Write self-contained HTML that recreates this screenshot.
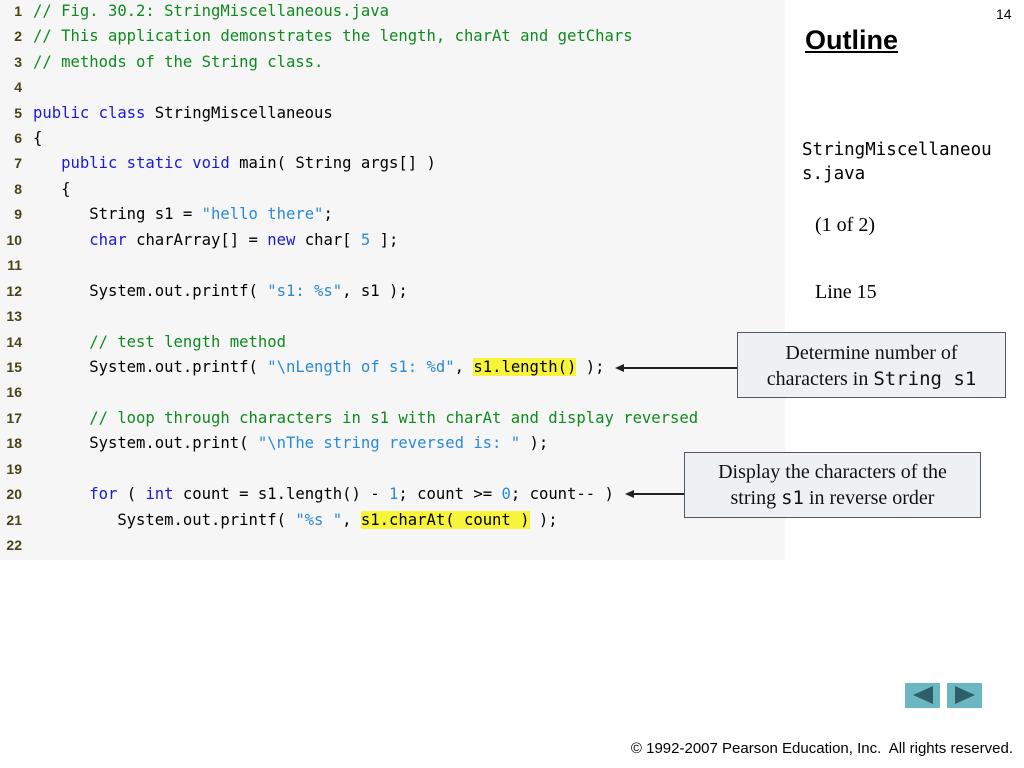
<!DOCTYPE html>
<html><head><style>
body{margin:0;width:1024px;height:768px;background:#fff;position:relative;overflow:hidden;font-family:"Liberation Sans",sans-serif}
#code{position:absolute;left:0;top:0;width:785px;height:560px;background:#f6f6f6}
.ln{position:absolute;left:0;width:22px;text-align:right;font:bold 14px "Liberation Sans",sans-serif;color:#4a4316}
.cd{position:absolute;left:33px;font:15.6px "DejaVu Sans Mono",monospace;color:#000;white-space:pre;letter-spacing:-0.02px}
.c{color:#0f8a1f}.k{color:#1a1ad6}.s{color:#2a8ad8}.h{background:#f7f43a}
.box{position:absolute;background:#eef1f4;border:1px solid #556;font:20px "Liberation Serif",serif;text-align:center;line-height:26px;color:#111}
.box code{font:19px "DejaVu Sans Mono",monospace}
.arr{position:absolute;height:2px;background:#222}
.ah{position:absolute;width:0;height:0;border-top:4px solid transparent;border-bottom:4px solid transparent;border-right:9px solid #222}
.nav{position:absolute;top:683px;width:35px;height:25px;background:#6ab7c2}
</style></head><body>
<div id="code"></div>
<div class="ln" style="top:3px">1</div><div class="cd c" style="top:2px">// Fig. 30.2: StringMiscellaneous.java</div>
<div class="ln" style="top:28px">2</div><div class="cd c" style="top:27px">// This application demonstrates the length, charAt and getChars</div>
<div class="ln" style="top:54px">3</div><div class="cd c" style="top:53px">// methods of the String class.</div>
<div class="ln" style="top:79px">4</div>
<div class="ln" style="top:105px">5</div><div class="cd" style="top:104px"><span class="k">public class</span> StringMiscellaneous</div>
<div class="ln" style="top:130px">6</div><div class="cd" style="top:129px">{</div>
<div class="ln" style="top:155px">7</div><div class="cd" style="top:154px">   <span class="k">public static void</span> main( String args[] )</div>
<div class="ln" style="top:181px">8</div><div class="cd" style="top:180px">   {</div>
<div class="ln" style="top:206px">9</div><div class="cd" style="top:205px">      String s1 = <span class="s">"hello there"</span>;</div>
<div class="ln" style="top:232px">10</div><div class="cd" style="top:231px">      <span class="k">char</span> charArray[] = <span class="k">new</span> char[ <span class="s">5</span> ];</div>
<div class="ln" style="top:257px">11</div>
<div class="ln" style="top:283px">12</div><div class="cd" style="top:282px">      System.out.printf( <span class="s">"s1: %s"</span>, s1 );</div>
<div class="ln" style="top:308px">13</div>
<div class="ln" style="top:334px">14</div><div class="cd c" style="top:333px">      // test length method</div>
<div class="ln" style="top:359px">15</div><div class="cd" style="top:358px">      System.out.printf( <span class="s">"\nLength of s1: %d"</span>, <span class="h">s1.length()</span> );</div>
<div class="ln" style="top:384px">16</div>
<div class="ln" style="top:410px">17</div><div class="cd c" style="top:409px">      // loop through characters in s1 with charAt and display reversed</div>
<div class="ln" style="top:435px">18</div><div class="cd" style="top:434px">      System.out.print( <span class="s">"\nThe string reversed is: "</span> );</div>
<div class="ln" style="top:461px">19</div>
<div class="ln" style="top:486px">20</div><div class="cd" style="top:485px">      <span class="k">for</span> ( <span class="k">int</span> count = s1.length() - <span class="s">1</span>; count &gt;= <span class="s">0</span>; count-- )</div>
<div class="ln" style="top:512px">21</div><div class="cd" style="top:511px">         System.out.printf( <span class="s">"%s "</span>, <span class="h">s1.charAt( count )</span> );</div>
<div class="ln" style="top:537px">22</div>

<div style="position:absolute;left:996px;top:6px;font-size:14px">14</div>
<div style="position:absolute;left:805px;top:25px;font:bold 27px 'Liberation Sans',sans-serif;text-decoration:underline">Outline</div>
<div style="position:absolute;left:802px;top:138px;font:17.5px 'DejaVu Sans Mono',monospace;line-height:24px">StringMiscellaneou<br>s.java</div>
<div style="position:absolute;left:815px;top:214px;font:20px 'Liberation Serif',serif">(1 of 2)</div>
<div style="position:absolute;left:815px;top:281px;font:20px 'Liberation Serif',serif">Line 15</div>

<div class="box" style="left:737px;top:332px;width:269px;height:66px;padding-top:7px;box-sizing:border-box">Determine number of<br>characters in <code>String s1</code></div>
<div class="arr" style="left:622px;top:367px;width:115px"></div><div class="ah" style="left:615px;top:364px"></div>
<div class="box" style="left:684px;top:452px;width:297px;height:66px;padding-top:6px;box-sizing:border-box">Display the characters of the<br>string <code>s1</code> in reverse order</div>
<div class="arr" style="left:633px;top:493px;width:51px"></div><div class="ah" style="left:625px;top:490px"></div>

<div class="nav" style="left:905px"><div style="position:absolute;left:8px;top:3px;border-top:9px solid transparent;border-bottom:9px solid transparent;border-right:20px solid #2e5f68"></div></div>
<div class="nav" style="left:947px"><div style="position:absolute;left:8px;top:3px;border-top:9px solid transparent;border-bottom:9px solid transparent;border-left:20px solid #2e5f68"></div></div>
<div style="position:absolute;right:11px;top:740px;font-size:15px">© 1992-2007 Pearson Education, Inc.&nbsp; All rights reserved.</div>
</body></html>
